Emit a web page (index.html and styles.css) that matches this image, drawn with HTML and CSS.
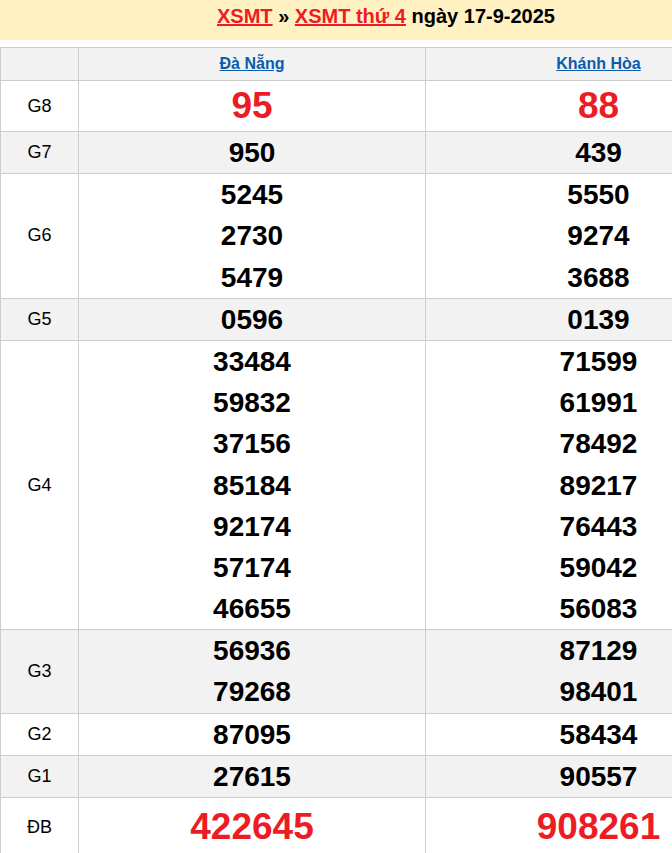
FILE: index.html
```html
<!DOCTYPE html>
<html lang="vi">
<head>
<meta charset="utf-8">
<title>XSMT thứ 4 ngày 17-9-2025</title>
<link rel="stylesheet" href="styles.css">
</head>
<body>
<div class="page">
  <h2 class="title"><a href="#">XSMT</a> » <a href="#">XSMT thứ 4</a> ngày 17-9-2025</h2>
  <table class="kq">
    <thead>
      <tr class="alt">
        <th class="lbl"></th>
        <th><a href="#">Đà Nẵng</a></th>
        <th><a href="#">Khánh Hòa</a></th>
      </tr>
    </thead>
    <tbody>
      <tr><td class="lbl">G8</td><td class="big"><div>95</div></td><td class="big"><div>88</div></td></tr>
      <tr class="alt"><td class="lbl">G7</td><td><div>950</div></td><td><div>439</div></td></tr>
      <tr><td class="lbl">G6</td><td><div>5245</div><div>2730</div><div>5479</div></td><td><div>5550</div><div>9274</div><div>3688</div></td></tr>
      <tr class="alt"><td class="lbl">G5</td><td><div>0596</div></td><td><div>0139</div></td></tr>
      <tr><td class="lbl">G4</td>
        <td><div>33484</div><div>59832</div><div>37156</div><div>85184</div><div>92174</div><div>57174</div><div>46655</div></td>
        <td><div>71599</div><div>61991</div><div>78492</div><div>89217</div><div>76443</div><div>59042</div><div>56083</div></td></tr>
      <tr class="alt"><td class="lbl">G3</td><td><div>56936</div><div>79268</div></td><td><div>87129</div><div>98401</div></td></tr>
      <tr><td class="lbl">G2</td><td><div>87095</div></td><td><div>58434</div></td></tr>
      <tr class="alt"><td class="lbl">G1</td><td><div>27615</div></td><td><div>90557</div></td></tr>
      <tr><td class="lbl">ĐB</td><td class="big db"><div>422645</div></td><td class="big db"><div>908261</div></td></tr>
    </tbody>
  </table>
</div>
</body>
</html>
```
FILE: styles.css
```css
html, body {
  margin: 0;
  padding: 0;
  background: #fff;
  overflow-x: hidden;
}
body {
  font-family: "Liberation Sans", Arial, sans-serif;
  color: #000;
}
.page {
  width: 772px;
}
.title {
  margin: 0 0 7px 0;
  height: 40px;
  line-height: 32px;
  background: #fff1c2;
  text-align: center;
  font-size: 20px;
  font-weight: bold;
}
.title a {
  color: #ed1c24;
  text-decoration: underline;
}
.kq {
  width: 772px;
  border-collapse: collapse;
  table-layout: fixed;
}
.kq th, .kq td {
  border: 1px solid #cccccc;
  padding: 0;
  text-align: center;
  vertical-align: middle;
}
.kq th {
  height: 32px;
  font-size: 16px;
  font-weight: bold;
}
.kq th a {
  color: #0b5cad;
  text-decoration: underline;
}
.kq th.lbl, .kq td.lbl {
  width: 77px;
}
.kq th:nth-child(2) {
  width: 346px;
}
.kq tr.alt {
  background: #f2f2f2;
}
.kq td.lbl {
  font-size: 18px;
  font-weight: normal;
}
.kq td div {
  font-size: 28px;
  font-weight: bold;
  line-height: 41.2px;
  height: 41.2px;
}
.kq td.big div {
  font-size: 37px;
  line-height: 50px;
  height: 50px;
  color: #ed1c24;
}
.kq td.db div {
  height: 58px;
  line-height: 58px;
}
```
